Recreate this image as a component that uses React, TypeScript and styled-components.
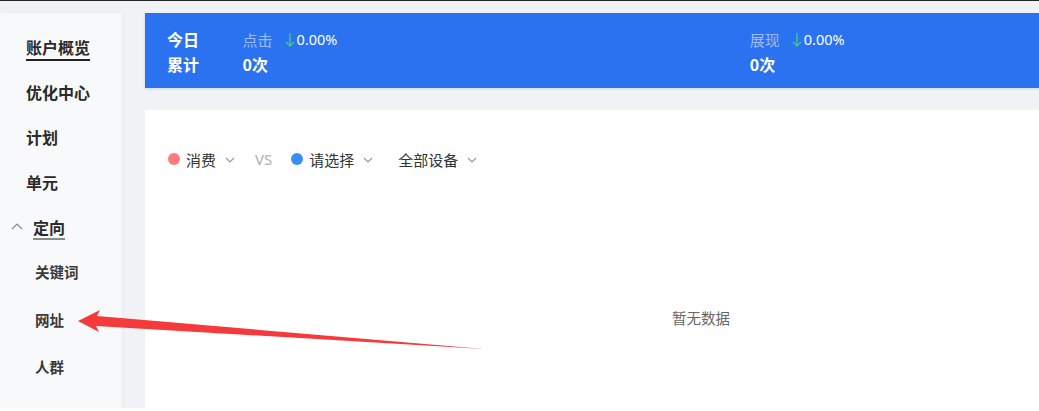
import styled, { createGlobalStyle } from "styled-components";

const GlobalStyle = createGlobalStyle`
  html, body {
    margin: 0;
    padding: 0;
    background: #ffffff;
    overflow: hidden;
    font-family: "Noto Sans CJK SC", "Noto Sans", "Liberation Sans", sans-serif;
  }
`;

const sideItems = [
  { label: "账户概览", level: 1, active: true },
  { label: "优化中心", level: 1 },
  { label: "计划", level: 1 },
  { label: "单元", level: 1 },
  { label: "定向", level: 1, open: true },
  { label: "关键词", level: 2 },
  { label: "网址", level: 2 },
  { label: "人群", level: 2 },
];

const ChevronDown = () => (
  <svg width="10" height="6" viewBox="0 0 10 6">
    <path d="M1 1l4 4 4-4" fill="none" stroke="#9a9a9a" strokeWidth="1.2" />
  </svg>
);

const ChevronUp = () => (
  <svg width="12" height="7" viewBox="0 0 12 7">
    <path d="M1 6l5-5 5 5" fill="none" stroke="#8a8a8a" strokeWidth="1.2" />
  </svg>
);

const DownArrow = () => (
  <svg width="10" height="16" viewBox="0 0 10 16">
    <path d="M5 1v13M1 10l4 4 4-4" fill="none" stroke="#3fc28d" strokeWidth="1.5" />
  </svg>
);

const App = () => {
  return (
    <>
      <GlobalStyle />
      <Page>
        <Sidebar>
          {sideItems.map((it) => (
            <SideItem key={it.label} $level={it.level}>
              {it.open && (
                <span className="caret">
                  <ChevronUp />
                </span>
              )}
              <SideLabel $active={it.active} $open={it.open}>
                {it.label}
              </SideLabel>
            </SideItem>
          ))}
        </Sidebar>
        <Main>
          <Banner>
            <div className="labels">
              <div>今日</div>
              <div>累计</div>
            </div>
            <Stat>
              <div className="top">
                <span className="name">点击</span>
                <DownArrow />
                <span className="rate">0.00%</span>
              </div>
              <div className="value">0次</div>
            </Stat>
            <Stat>
              <div className="top">
                <span className="name">展现</span>
                <DownArrow />
                <span className="rate">0.00%</span>
              </div>
              <div className="value">0次</div>
            </Stat>
          </Banner>
          <Card>
            <ChartBar>
              <Picker>
                <Dot $color="#ff7a7a" />
                消费
                <ChevronDown />
              </Picker>
              <Vs>VS</Vs>
              <Picker>
                <Dot $color="#3a8ff7" />
                请选择
                <ChevronDown />
              </Picker>
              <Picker>
                全部设备
                <ChevronDown />
              </Picker>
            </ChartBar>
            <Empty>暂无数据</Empty>
          </Card>
        </Main>
        <Pointer width="1039" height="411" viewBox="0 0 1039 411">
          <polygon
            points="78,321 100,310 97,316 484,349 96,326 99,332"
            fill="#f43a3a"
          />
        </Pointer>
      </Page>
    </>
  );
};

export default App;

const Page = styled.div`
  position: relative;
  display: flex;
  align-items: stretch;
  height: 395px;
  padding-top: 12px;
  border-top: 1px solid #262626;
  background: #f1f2f5;
`;

const Sidebar = styled.nav`
  width: 122px;
  flex-shrink: 0;
  padding-top: 12px;
  box-sizing: border-box;
  background: #f8f9fb;
  box-shadow: 1px 0 3px rgba(0, 0, 0, 0.04);
`;

const SideItem = styled.div<{ $level: number }>`
  display: flex;
  align-items: flex-start;
  height: ${(p) => (p.$level === 1 ? "45px" : "47.5px")};
  padding-top: 11px;
  box-sizing: border-box;
  padding-left: ${(p) => (p.$level === 1 ? "26px" : "35px")};
  font-size: ${(p) => (p.$level === 1 ? "16px" : "14.5px")};
  font-weight: ${(p) => (p.$level === 1 ? 700 : 600)};
  color: ${(p) => (p.$level === 1 ? "#2a2a2a" : "#3a3a3a")};
  position: relative;

  > .caret {
    position: absolute;
    left: 11px;
    top: 18px;
    display: flex;
  }
`;

const SideLabel = styled.span<{ $active?: boolean; $open?: boolean }>`
  display: inline-block;
  line-height: 22px;
  margin-left: ${(p) => (p.$open ? "7px" : "0")};
  padding-bottom: ${(p) => (p.$active ? "1px" : "0")};
  border-bottom: 2px solid
    ${(p) => (p.$active ? "#222" : p.$open ? "#8a8a8a" : "transparent")};
`;

const Main = styled.main`
  display: flex;
  flex-direction: column;
  width: 1112px;
  flex-shrink: 0;
  margin-left: 23px;
`;

const Banner = styled.section`
  display: flex;
  height: 75px;
  box-sizing: border-box;
  padding: 14px 0 0 22px;
  background: #2b72f0;
  box-shadow: 0 1px 3px rgba(0, 0, 0, 0.12);
  color: #fff;

  > .labels {
    width: 76px;
    font-size: 16px;
    font-weight: 700;
    line-height: 25px;
  }
`;

const Stat = styled.div`
  width: 510px;
  line-height: 25px;

  > .top {
    display: flex;
    align-items: center;
    height: 25px;
    font-size: 15px;
    > .name {
      color: #9dbdf7;
      margin-right: 12px;
    }
    > svg {
      margin-right: 2px;
    }
    > .rate {
      color: #fff;
      font-family: "Noto Sans", "Open Sans", sans-serif;
      font-size: 14.5px;
    }
  }
  > .value {
    font-size: 16px;
    font-weight: 700;
  }
`;

const Card = styled.section`
  flex: 1;
  margin-top: 22px;
  background: #fff;
  display: flex;
  flex-direction: column;
  padding: 38px 0 0 23px;
  margin-bottom: -4px;
`;

const ChartBar = styled.div`
  display: flex;
  align-items: center;
  height: 22px;
`;

const Picker = styled.div`
  display: flex;
  align-items: center;
  font-size: 15px;
  color: #333;
  margin-right: 25px;

  > svg {
    margin-left: 9px;
    margin-top: 1px;
  }
`;

const Dot = styled.span<{ $color: string }>`
  width: 12px;
  height: 12px;
  border-radius: 50%;
  background: ${(p) => p.$color};
  margin-right: 6px;
`;

const Vs = styled.span`
  font-size: 15px;
  color: #b0b0b0;
  margin: 0 19px 0 -5px;
  font-family: "Noto Sans", "Open Sans", sans-serif;
`;

const Empty = styled.div`
  margin-top: 137px;
  padding-right: 23px;
  text-align: center;
  font-size: 14.5px;
  color: #666;
`;

const Pointer = styled.svg`
  position: absolute;
  left: 0;
  top: -1px;
  pointer-events: none;
`;
